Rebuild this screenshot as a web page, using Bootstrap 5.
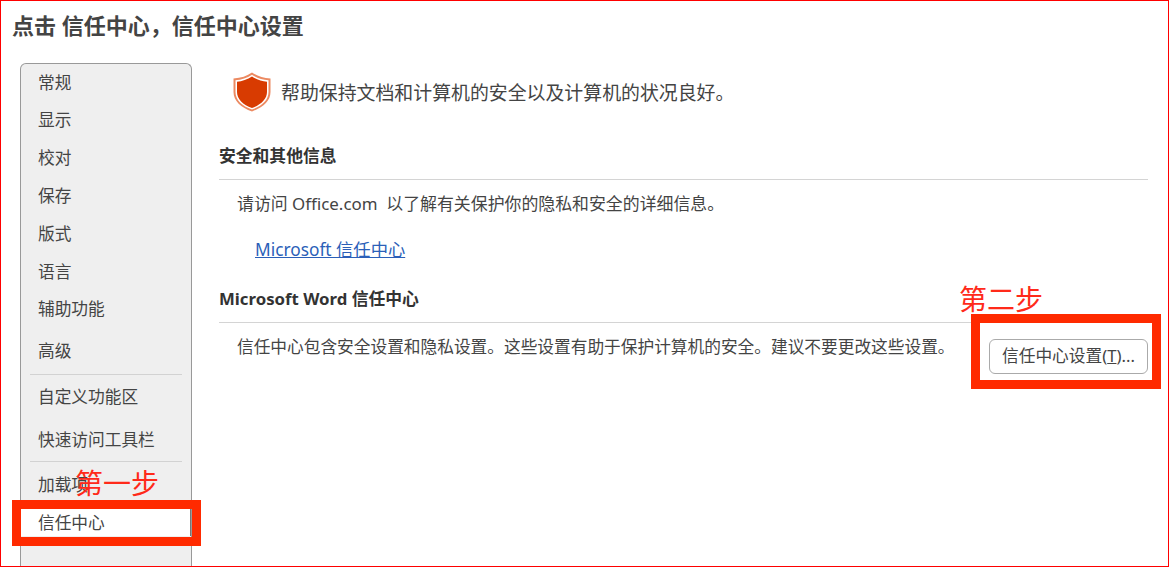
<!DOCTYPE html>
<html lang="zh-CN">
<head>
  <meta charset="UTF-8">
  <title>信任中心设置</title>
  <link href="https://cdn.jsdelivr.net/npm/bootstrap@5.3.0/dist/css/bootstrap.min.css" rel="stylesheet">
  <style>
    html, body { height: 100%; background: #fff; }
    body { font-family: "Noto Sans", "Noto Sans CJK SC", sans-serif; color: #444; overflow: hidden; }
    .shot-frame { position: relative; height: 567px; border: 1px solid #f00; overflow: hidden; }
    .shot-title { font-size: 22px; font-weight: 700; line-height: 28px; margin: 10px 0 24px 11px; color: #444; }
    .side-menu { width: 172px; height: 520px; margin-left: 19px; flex: none; background: #efefef; border: 1px solid #999; border-bottom: 0; border-radius: 6px 6px 0 0; }
    .side-item { display: flex; align-items: center; height: 38px; padding-left: 17px; font-size: 16.7px; color: #444; }
    .side-sep { height: 1px; margin: 0 9px; background: #d2d2d2; }
    .side-active { height: 28px; padding-top: 2px; background: #fff; border-right: 1px solid #777; }
    .h-37 { height: 37px; }
    .h-42 { height: 42px; }
    .h-44 { height: 44px; }
    .h-46 { height: 46px; }
    .main-pane { padding: 0 19px 0 27px; margin-right: 1px; }
    .hero-line { font-size: 18.9px; height: 48px; margin: 5px 0 28px 14px; gap: 10px; }
    .hero-text { padding-top: 3px; }
    .sec-head { font-size: 16.8px; font-weight: 700; line-height: 24px; color: #333; padding-bottom: 11px; border-bottom: 1px solid #d4d4d4; }
    .sec-text { font-size: 16.7px; line-height: 24px; margin-left: 18px; }
    .sec-text-wide { font-size: 16.9px; margin-top: 12px; }
    .link-row { margin-top: 22px; }
    .ms-link { font-size: 17.3px; line-height: 24px; margin-left: 36px; color: #2b5fb8; }
    .sec-head-word { margin-top: 25px; }
    .word-row { margin-top: 12px; }
    .trust-btn { width: 159px; height: 35px; margin-top: 4px; padding: 0 0 2px; font-size: 16.7px; color: #444; background: #fff; border: 1px solid #aaa; border-radius: 6px; }
    .step-box { position: absolute; border: 9px solid #ff2a00; }
    .step-box-one { left: 11px; top: 499px; width: 189px; height: 46px; }
    .step-box-two { left: 970px; top: 313px; width: 190px; height: 75px; }
    .step-label { position: absolute; font-size: 28px; line-height: 34px; font-weight: 400; color: #ff2a1a; }
    .step-label-one { left: 74px; top: 465px; }
    .step-label-two { left: 958px; top: 281px; }
  </style>
</head>
<body>
  <div class="shot-frame">
    <h1 class="shot-title">点击 信任中心，信任中心设置</h1>
    <div class="d-flex">
      <!-- 左侧选项列表 -->
      <div class="side-menu">
        <div class="side-item h-37">常规</div>
        <div class="side-item">显示</div>
        <div class="side-item">校对</div>
        <div class="side-item">保存</div>
        <div class="side-item">版式</div>
        <div class="side-item h-37">语言</div>
        <div class="side-item">辅助功能</div>
        <div class="side-item h-46">高级</div>
        <div class="side-sep"></div>
        <div class="side-item h-44">自定义功能区</div>
        <div class="side-item h-42">快速访问工具栏</div>
        <div class="side-sep"></div>
        <div class="side-item h-46">加载项</div>
        <div class="side-item side-active">信任中心</div>
      </div>

      <!-- 右侧内容 -->
      <div class="main-pane flex-grow-1">
        <div class="hero-line d-flex align-items-center">
          <svg width="38" height="40" viewBox="0 0 38 40">
            <path d="M19 .5C14 4 8 6 .5 6.500V20C.5 29 8 35.500 19 39.500C30 35.500 37.500 29 37.500 20V6.500C30 6 24 4 19 .5Z" fill="#ec8a62"/>
            <path d="M19 2.800C14 6 8.500 7.800 2.500 8.300V20C2.500 28 9 34 19 37.500C29 34 35.500 28 35.500 20V8.300C29.500 7.800 24 6 19 2.800Z" fill="#fff"/>
            <path d="M19 4.500C14.500 7.500 9 9.300 4 9.800V20C4 27 10 32.800 19 36C28 32.800 34 27 34 20V9.800C29 9.300 23.500 7.500 19 4.500Z" fill="#d83b01"/>
          </svg>
          <span class="hero-text">帮助保持文档和计算机的安全以及计算机的状况良好。</span>
        </div>
        <div class="sec-head">安全和其他信息</div>
        <div class="sec-text sec-text-wide">请访问 Office.com&nbsp; 以了解有关保护你的隐私和安全的详细信息。</div>
        <div class="link-row"><a href="#" class="ms-link">Microsoft 信任中心</a></div>
        <div class="sec-head sec-head-word">Microsoft Word 信任中心</div>
        <div class="word-row d-flex justify-content-between align-items-start">
          <div class="sec-text">信任中心包含安全设置和隐私设置。这些设置有助于保护计算机的安全。建议不要更改这些设置。</div>
          <button type="button" class="trust-btn">信任中心设置(<u>T</u>)...</button>
        </div>
      </div>
    </div>

    <!-- 截图上的红色标注 -->
    <div class="step-box step-box-one"></div>
    <div class="step-label step-label-one">第一步</div>
    <div class="step-box step-box-two"></div>
    <div class="step-label step-label-two">第二步</div>
  </div>
  <script src="https://cdn.jsdelivr.net/npm/bootstrap@5.3.0/dist/js/bootstrap.bundle.min.js"></script>
</body>
</html>
